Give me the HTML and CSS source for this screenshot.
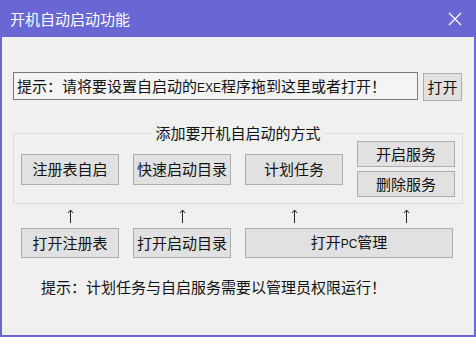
FILE: index.html
```html
<!DOCTYPE html>
<html lang="zh-CN">
<head>
  <meta charset="UTF-8">
  <title>开机自动启动功能</title>
  <link rel="stylesheet" href="styles.css">
</head>
<body>
  <div class="window">
    <div class="titlebar">
      <span class="title">开机自动启动功能</span>
      <svg class="close" width="14" height="14" viewBox="0 0 14 14">
        <path d="M1 1 L13 13 M13 1 L1 13" stroke="#fff" stroke-width="1.3" fill="none"/>
      </svg>
    </div>

    <div class="content">
      <div class="path-row">
        <div class="path-box">提示：请将要设置自启动的<span class="latin">EXE</span>程序拖到这里或者打开！</div>
        <button class="btn btn-open">打开</button>
      </div>

      <fieldset class="group">
        <legend>添加要开机自启动的方式</legend>
        <div class="grid">
          <button class="btn btn-main">注册表自启</button>
          <button class="btn btn-main">快速启动目录</button>
          <button class="btn btn-main">计划任务</button>
          <div class="service">
            <button class="btn btn-small">开启服务</button>
            <button class="btn btn-small">删除服务</button>
          </div>
        </div>
      </fieldset>

      <div class="grid arrows">
        <svg class="arrow" width="7" height="14" viewBox="0 0 7 14"><path d="M3.5 1 V14 M1 4 L3.5 1 L6 4" stroke="#222" stroke-width="1" fill="none"/></svg>
        <svg class="arrow" width="7" height="14" viewBox="0 0 7 14"><path d="M3.5 1 V14 M1 4 L3.5 1 L6 4" stroke="#222" stroke-width="1" fill="none"/></svg>
        <svg class="arrow" width="7" height="14" viewBox="0 0 7 14"><path d="M3.5 1 V14 M1 4 L3.5 1 L6 4" stroke="#222" stroke-width="1" fill="none"/></svg>
        <svg class="arrow" width="7" height="14" viewBox="0 0 7 14"><path d="M3.5 1 V14 M1 4 L3.5 1 L6 4" stroke="#222" stroke-width="1" fill="none"/></svg>
      </div>

      <div class="grid open-row">
        <button class="btn btn-open2">打开注册表</button>
        <button class="btn btn-open2">打开启动目录</button>
        <button class="btn btn-open2 wide">打开<span class="latin">PC</span>管理</button>
      </div>

      <p class="note">提示：计划任务与自启服务需要以管理员权限运行！</p>
    </div>
  </div>
</body>
</html>
```

FILE: styles.css
```css
* {
  box-sizing: border-box;
}

body {
  margin: 0;
  font-family: "Noto Sans CJK SC", "Microsoft YaHei", sans-serif;
  font-size: 15px;
  color: #111;
}

.window {
  width: 476px;
  height: 337px;
  background-color: #f0f0f0;
  border: 2px solid #6a66d4;
  border-top: none;
  display: flex;
  flex-direction: column;
}

.titlebar {
  height: 37px;
  margin: 0 -2px;
  background-color: #6a66d4;
  display: flex;
  align-items: center;
  justify-content: space-between;
  padding: 0 14px 0 10px;
  flex-shrink: 0;
}

.title {
  color: #fff;
  font-size: 15px;
  line-height: 20px;
}

.content {
  padding: 35px 0 0 11px;
}

.path-row {
  display: flex;
  gap: 5px;
  height: 28px;
}

.path-box {
  width: 405px;
  height: 28px;
  border: 1px solid #7a7a7a;
  background-color: #f4f4f4;
  padding: 0 3px;
  line-height: 25px;
  white-space: nowrap;
  overflow: hidden;
}

.latin {
  font-family: "Liberation Sans", Arial, sans-serif;
  font-size: 12px;
}

.btn {
  font-family: inherit;
  font-size: 15px;
  color: #111;
  background-color: #e1e1e1;
  border: 1px solid #adadad;
  padding: 0;
  margin: 0;
  line-height: 20px;
}

.btn-open {
  width: 39px;
  height: 28px;
  margin-top: 1px;
}

.group {
  margin: 23px 0 0 0;
  padding: 0 7px 6px 7px;
  width: 450px;
  border: 1px solid #dcdcdc;
  border-radius: 0;
}

.group legend {
  margin: 0 auto;
  padding: 0 3px;
  line-height: 20px;
}

.grid {
  display: grid;
  grid-template-columns: repeat(4, 98px);
  column-gap: 14px;
  align-items: center;
}

.group .grid {
  margin-top: -2px;
}

.btn-main {
  height: 31px;
}

.service {
  display: flex;
  flex-direction: column;
  gap: 4px;
}

.btn-small {
  height: 26px;
}

.arrows {
  margin: 5px 0 0 8px;
  height: 14px;
  justify-items: center;
}

.arrow {
  display: block;
}

.open-row {
  margin: 5px 0 0 8px;
}

.btn-open2 {
  height: 30px;
}

.wide {
  grid-column: span 2;
  width: 208px;
}

.note {
  margin: 19px 0 0 28px;
  line-height: 20px;
}
```
